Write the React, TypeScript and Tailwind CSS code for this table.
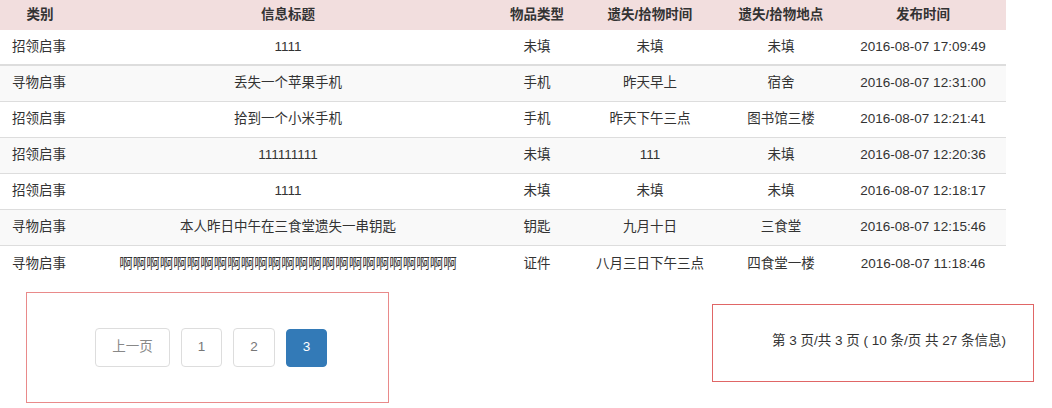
import React from "react";

const rows = [
  ["招领启事", "1111", "未填", "未填", "未填", "2016-08-07 17:09:49"],
  ["寻物启事", "丢失一个苹果手机", "手机", "昨天早上", "宿舍", "2016-08-07 12:31:00"],
  ["招领启事", "拾到一个小米手机", "手机", "昨天下午三点", "图书馆三楼", "2016-08-07 12:21:41"],
  ["招领启事", "111111111", "未填", "111", "未填", "2016-08-07 12:20:36"],
  ["招领启事", "1111", "未填", "未填", "未填", "2016-08-07 12:18:17"],
  ["寻物启事", "本人昨日中午在三食堂遗失一串钥匙", "钥匙", "九月十日", "三食堂", "2016-08-07 12:15:46"],
  ["寻物启事", "啊啊啊啊啊啊啊啊啊啊啊啊啊啊啊啊啊啊啊啊啊啊啊啊啊", "证件", "八月三日下午三点", "四食堂一楼", "2016-08-07 11:18:46"],
];

const grid = "grid grid-cols-[80px_416px_82px_144px_118px_166px] items-center";

export default function App() {
  return (
    <div
      className="w-[1052px] h-[408px] bg-white text-[#333] text-[13.5px]"
      style={{ fontFamily: '"Liberation Sans", Arial, "Noto Sans CJK SC", sans-serif' }}
    >
      <div className="w-[1006px]">
        <div className={`${grid} h-[30px] bg-[#f2dede] font-bold`}>
          {["类别", "信息标题", "物品类型", "遗失/拾物时间", "遗失/拾物地点", "发布时间"].map((h) => (
            <div key={h} className="text-center whitespace-nowrap">{h}</div>
          ))}
        </div>
        {rows.map((r, i) => (
          <div
            key={i}
            className={`${grid} box-border h-[36px] ${i % 2 === 1 ? "bg-[#f9f9f9]" : "bg-white"} ${
              i === 0 ? "border-b-2 border-[#ddd]" : i < rows.length - 1 ? "border-b border-[#ddd]" : ""
            }`}
          >
            <div className="pl-[12px] whitespace-nowrap">{r[0]}</div>
            {r.slice(1).map((c, j) => (
              <div key={j} className="text-center whitespace-nowrap">{c}</div>
            ))}
          </div>
        ))}
      </div>

      <div className="flex items-start mt-[10px]">
        <div className="ml-[26px] w-[363px] h-[111px] border border-[#e98a8a] flex items-center justify-center gap-[11px] pl-[7px]">
          <div className="w-[75px] h-[39px] border border-[#ddd] rounded-[4px] flex items-center justify-center text-[#888]">上一页</div>
          <div className="w-[41px] h-[39px] border border-[#ddd] rounded-[4px] flex items-center justify-center text-[#777]">1</div>
          <div className="w-[42px] h-[39px] border border-[#ddd] rounded-[4px] flex items-center justify-center text-[#777]">2</div>
          <div className="w-[41px] h-[38px] border border-[#337ab7] bg-[#337ab7] rounded-[4px] flex items-center justify-center text-white">3</div>
        </div>
        <div className="ml-[323px] mt-[12px] w-[322px] h-[78px] border border-[#e06666] flex items-center justify-end pr-[27px] pb-[4px]">
          第 3 页/共 3 页 ( 10 条/页 共 27 条信息)
        </div>
      </div>
    </div>
  );
}
